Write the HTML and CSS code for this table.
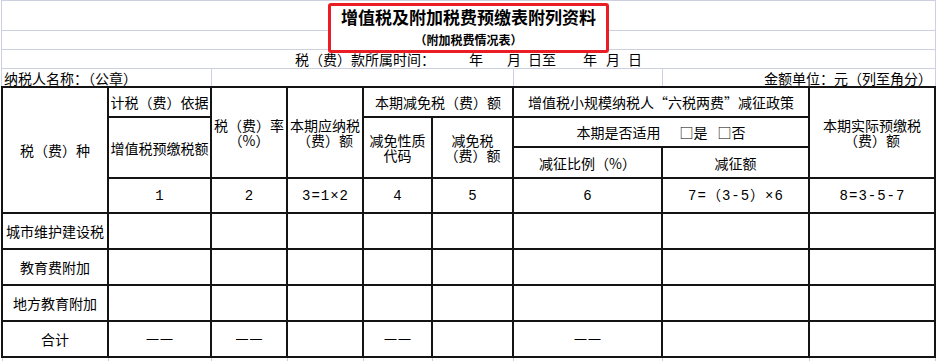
FILE: index.html
```html
<!DOCTYPE html>
<html lang="zh-CN">
<head>
<meta charset="utf-8">
<title>增值税及附加税费预缴表附列资料</title>
<link rel="stylesheet" href="styles.css">
</head>
<body>
<div class="sheet">
  <div class="top">
    <div class="row row-title"><span class="title">增值税及附加税费预缴表附列资料</span></div>
    <div class="row row-sub"><span class="subtitle">（附加税费情况表）</span></div>
    <div class="row row-time">
      <span>税（费）款所属时间：</span><span class="g34">年</span><span class="g24">月</span><span class="g7">日至</span><span class="g27">年</span><span class="g9">月</span><span class="g8">日</span>
    </div>
    <div class="row row-info">
      <div class="info-cell info-name">纳税人名称：（公章）</div>
      <div class="info-cell info-b"></div>
      <div class="info-cell info-c"></div>
      <div class="info-cell info-unit">金额单位：元（列至角分）</div>
    </div>
  </div>

  <div class="grid">
    <div class="cell h-kind">税（费）种</div>
    <div class="cell h-basis">计税（费）依据</div>
    <div class="cell two h-rate"><span>税（费）率</span><span>（%）</span></div>
    <div class="cell two h-due"><span>本期应纳税</span><span>（费）额</span></div>
    <div class="cell h-relief">本期减免税（费）额</div>
    <div class="cell h-policy">增值税小规模纳税人“六税两费”减征政策</div>
    <div class="cell two h-actual"><span>本期实际预缴税</span><span>（费）额</span></div>
    <div class="cell h-vat">增值税预缴税额</div>
    <div class="cell two h-code"><span>减免性质</span><span>代码</span></div>
    <div class="cell two h-amount"><span>减免税</span><span>（费）额</span></div>
    <div class="cell h-apply">本期是否适用<span class="g19">□是</span><span class="g10">□否</span></div>
    <div class="cell h-ratio">减征比例（%）</div>
    <div class="cell h-cut">减征额</div>

    <div class="cell num n2">1</div>
    <div class="cell num n3">2</div>
    <div class="cell num n4">3=1×2</div>
    <div class="cell num n5">4</div>
    <div class="cell num n6">5</div>
    <div class="cell num n7">6</div>
    <div class="cell num n8">7=（3-5）×6</div>
    <div class="cell num n9">8=3-5-7</div>

    <div class="cell">城市维护建设税</div>
    <div class="cell"></div><div class="cell"></div><div class="cell"></div><div class="cell"></div>
    <div class="cell"></div><div class="cell"></div><div class="cell"></div><div class="cell"></div>

    <div class="cell">教育费附加</div>
    <div class="cell"></div><div class="cell"></div><div class="cell"></div><div class="cell"></div>
    <div class="cell"></div><div class="cell"></div><div class="cell"></div><div class="cell"></div>

    <div class="cell">地方教育附加</div>
    <div class="cell"></div><div class="cell"></div><div class="cell"></div><div class="cell"></div>
    <div class="cell"></div><div class="cell"></div><div class="cell"></div><div class="cell"></div>

    <div class="cell">合计</div>
    <div class="cell"><span class="dash">——</span></div>
    <div class="cell"><span class="dash">——</span></div>
    <div class="cell"></div>
    <div class="cell"><span class="dash">——</span></div>
    <div class="cell"></div>
    <div class="cell"><span class="dash">——</span></div>
    <div class="cell"></div>
    <div class="cell"></div>
  </div>

  <div class="strip">
    <div></div><div></div><div></div><div></div><div></div><div></div><div></div><div></div><div class="last"></div>
  </div>
</div>
<div class="highlight"></div>
</body>
</html>
```

FILE: styles.css
```css
* { box-sizing: border-box; }

html, body {
  margin: 0;
  padding: 0;
  background: #fff;
}

body {
  width: 938px;
  height: 361px;
  overflow: hidden;
  position: relative;
  font-family: "Noto Sans CJK SC", "Noto Sans", sans-serif;
  font-size: 14px;
  color: #000;
}

.sheet {
  margin-left: 1px;
  width: 935px;
}

.top {
  border-top: 1px solid #ccd0e0;
  border-left: 1px solid #ccd0e0;
  border-right: 1px solid #ccd0e0;
}

.row {
  display: flex;
  align-items: center;
  justify-content: center;
  white-space: nowrap;
}

.row-title {
  height: 30px;
  padding-top: 2px;
  border-bottom: 1px solid #ccd0e0;
}

.title {
  position: relative;
  z-index: 2;
  font-size: 17px;
  font-weight: 700;
  line-height: 20px;
}

.row-sub {
  height: 19px;
  border-bottom: 1px solid #ccd0e0;
}

.subtitle {
  position: relative;
  z-index: 2;
  font-size: 12px;
  font-weight: 700;
  line-height: 16px;
}

.row-time {
  height: 19px;
  line-height: 16px;
  border-bottom: 1px solid #ccd0e0;
}

.g7 { margin-left: 7px; }
.g8 { margin-left: 8px; }
.g9 { margin-left: 9px; }
.g10 { margin-left: 10px; }
.g19 { margin-left: 19px; }
.g24 { margin-left: 24px; }
.g27 { margin-left: 27px; }
.g34 { margin-left: 34px; }

.row-info {
  height: 17px;
  justify-content: flex-start;
  align-items: stretch;
}

.info-cell {
  display: flex;
  align-items: center;
  line-height: 16px;
}

.info-name {
  width: 209px;
  padding-left: 2px;
}

.info-b {
  width: 302px;
  border-left: 1px solid #ccd0e0;
}

.info-c {
  width: 149px;
  border-left: 1px solid #ccd0e0;
}

.info-unit {
  flex: 1;
  border-left: 1px solid #ccd0e0;
  justify-content: flex-end;
  padding-right: 3px;
}

.grid {
  display: grid;
  grid-template-columns: 104px 101px 74px 74px 67px 79px 147px 145px 124px;
  grid-template-rows: 28px 28px 29px 33px 34px 34px 34px 34px;
  gap: 2px;
  padding: 2px;
  background: #141414;
  width: 935px;
}

.cell {
  background: #fff;
  display: flex;
  align-items: center;
  justify-content: center;
  text-align: center;
  line-height: 16px;
  white-space: nowrap;
}

.two {
  flex-direction: column;
  gap: 0;
}

.two > span {
  display: block;
  line-height: 15px;
}

.h-kind { grid-column: 1; grid-row: 1 / 5; }
.h-basis { grid-column: 2; grid-row: 1; }
.h-rate { grid-column: 3; grid-row: 1 / 4; }
.h-due { grid-column: 4; grid-row: 1 / 4; }
.h-relief { grid-column: 5 / 7; grid-row: 1; }
.h-policy { grid-column: 7 / 9; grid-row: 1; }
.h-actual { grid-column: 9; grid-row: 1 / 4; }
.h-vat { grid-column: 2; grid-row: 2 / 4; }
.h-code { grid-column: 5; grid-row: 2 / 4; }
.h-amount { grid-column: 6; grid-row: 2 / 4; }
.h-apply { grid-column: 7 / 9; grid-row: 2; }
.h-ratio { grid-column: 7; grid-row: 3; }
.h-cut { grid-column: 8; grid-row: 3; }

.n2 { grid-column: 2; grid-row: 4; }
.n3 { grid-column: 3; grid-row: 4; }
.n4 { grid-column: 4; grid-row: 4; }
.n5 { grid-column: 5; grid-row: 4; }
.n6 { grid-column: 6; grid-row: 4; }
.n7 { grid-column: 7; grid-row: 4; }
.n8 { grid-column: 8; grid-row: 4; }
.n9 { grid-column: 9; grid-row: 4; }

.num {
  font-family: "Liberation Mono", "Noto Sans CJK SC", monospace;
  letter-spacing: 1px;
  padding-left: 1px;
}

.dash {
  font-family: "Liberation Sans", sans-serif;
  font-size: 12px;
  letter-spacing: 2px;
  padding-left: 2px;
}

.strip {
  display: grid;
  grid-template-columns: 106px 103px 76px 76px 69px 81px 149px 147px 127px;
  height: 3px;
  margin-left: 1px;
}

.strip > div {
  border-left: 1px solid #ccd0e0;
}

.strip > .last {
  border-right: 1px solid #ccd0e0;
}

.highlight {
  position: absolute;
  left: 328px;
  top: 3px;
  width: 281px;
  height: 50px;
  border: 3px solid #ea1c24;
  border-radius: 3px;
  background: #fff;
  z-index: 1;
}
```
